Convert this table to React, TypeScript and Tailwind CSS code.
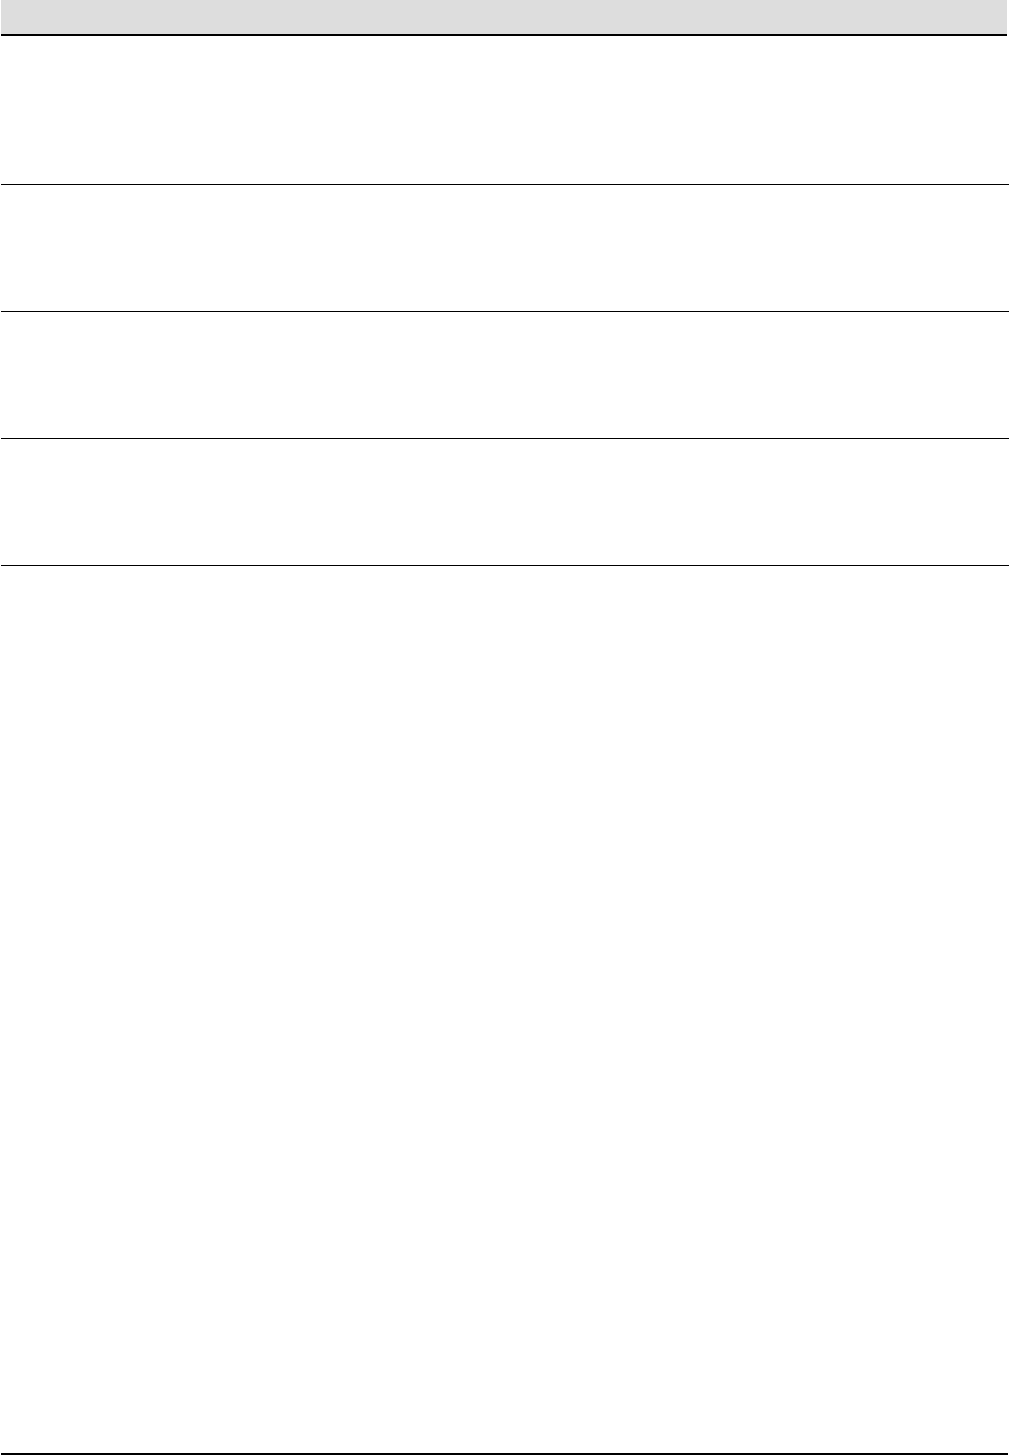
export default function App() {
  const rows = [149, 127, 127, 127];
  return (
    <div className="w-[1010px] h-[1456px] bg-white font-['Liberation_Sans',sans-serif]">
      <div className="ml-[1px] w-[1008px] flex flex-col h-[1455px]">
        <div className="w-[1006px] h-[36px] bg-[#dddddd] border-b-2 border-black shrink-0" />
        {rows.map((h, i) => (
          <div
            key={i}
            className="w-[1008px] border-b border-black shrink-0"
            style={{ height: h }}
          />
        ))}
        <div className="flex-1 w-[1007px] border-b-2 border-black" />
      </div>
    </div>
  );
}
